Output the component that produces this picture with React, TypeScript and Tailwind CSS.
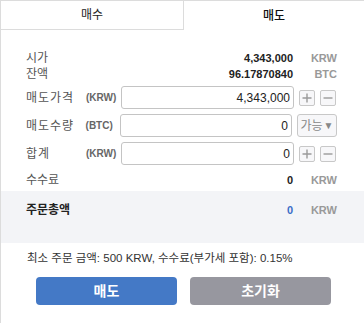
import React from 'react'

const font = { fontFamily: '"Liberation Sans", Arial, "Noto Sans CJK KR", sans-serif' }

function SmallBtn({ children }: { children: React.ReactNode }) {
    return (
        <div className="w-[16px] h-[16px] border border-[#c8c8c8] rounded-[2px] bg-[#f7f7f9] flex items-center justify-center text-[#999]">
            {children}
        </div>
    )
}

function Plus() {
    return (
        <svg width="10" height="10" viewBox="0 0 10 10">
            <path d="M5 0.5v9M0.5 5h9" stroke="#9a9a9a" strokeWidth="1.4" />
        </svg>
    )
}

function Minus() {
    return (
        <svg width="10" height="10" viewBox="0 0 10 10">
            <path d="M0.5 5h9" stroke="#9a9a9a" strokeWidth="1.4" />
        </svg>
    )
}

function InputRow({ label, unit, value, right }: { label: string; unit: string; value: string; right: React.ReactNode }) {
    return (
        <div className="flex items-center h-[23px]">
            <span className="w-[60px] text-[12px] text-[#555] tracking-[1px]">{label}</span>
            <span className="w-[35px] text-[10px] font-bold text-[#666]">{unit}</span>
            <div className="w-[173px] h-[23px] border border-[#c4c4c4] rounded-[3px] bg-white flex items-center justify-end pr-[3px] text-[12px] text-[#222]">
                {value}
            </div>
            <div className="ml-[5px] flex items-center">{right}</div>
        </div>
    )
}

export default function App() {
    return (
        <div className="w-[364px] h-[323px] bg-white border-t border-l border-[#dcdcdc] overflow-hidden" style={font}>
            {/* Tabs */}
            <div className="flex h-[29px]">
                <div className="w-[183px] border-r border-b border-[#dcdcdc] flex items-center justify-center text-[12px] text-[#222]">
                    매수
                </div>
                <div className="flex-1 flex items-center justify-center text-[12px] text-[#111] font-medium">
                    매도
                </div>
            </div>

            <div className="pl-[25px] pr-[27px] pt-[20px]">
                <div className="flex items-center h-[16px]">
                    <span className="flex-1 text-[12px] text-[#555]">시가</span>
                    <span className="text-[11px] font-bold text-[#222]">4,343,000</span>
                    <span className="w-[44px] text-right text-[11px] font-bold text-[#999]">KRW</span>
                </div>
                <div className="flex items-center h-[16px]">
                    <span className="flex-1 text-[12px] text-[#555]">잔액</span>
                    <span className="text-[11px] font-bold text-[#222]">96.17870840</span>
                    <span className="w-[44px] text-right text-[11px] font-bold text-[#999]">BTC</span>
                </div>

                <div className="mt-[4px] flex flex-col gap-[5px]">
                    <InputRow
                        label="매도가격"
                        unit="(KRW)"
                        value="4,343,000"
                        right={<div className="flex gap-[5px]"><SmallBtn><Plus /></SmallBtn><SmallBtn><Minus /></SmallBtn></div>}
                    />
                    <InputRow
                        label="매도수량"
                        unit="(BTC)"
                        value="0"
                        right={
                            <div className="w-[40px] h-[23px] border border-[#c8c8c8] rounded-[3px] bg-[#f7f7f9] flex items-center justify-center text-[12px] text-[#888]">
                                가능<span className="text-[10px] ml-[1px]">▼</span>
                            </div>
                        }
                    />
                    <InputRow
                        label="합계"
                        unit="(KRW)"
                        value="0"
                        right={<div className="flex gap-[5px]"><SmallBtn><Plus /></SmallBtn><SmallBtn><Minus /></SmallBtn></div>}
                    />
                </div>

                <div className="flex items-center h-[16px] mt-[7px]">
                    <span className="flex-1 text-[12px] text-[#555]">수수료</span>
                    <span className="text-[11px] font-bold text-[#222]">0</span>
                    <span className="w-[44px] text-right text-[11px] font-bold text-[#999]">KRW</span>
                </div>
            </div>

            {/* Order total band */}
            <div className="mt-[3px] h-[52px] bg-[#f3f4f7] pl-[25px] pr-[27px] pt-[11px]">
                <div className="flex items-center h-[16px]">
                    <span className="flex-1 text-[12px] font-bold text-[#222]">주문총액</span>
                    <span className="text-[11px] font-bold text-[#3a6cc8]">0</span>
                    <span className="w-[44px] text-right text-[11px] font-bold text-[#999]">KRW</span>
                </div>
            </div>

            <div className="pl-[26px] mt-[8px] text-[11.5px] text-[#333] h-[16px] flex items-center">
                최소 주문 금액: 500 KRW, 수수료(부가세 포함): 0.15%
            </div>

            <div className="flex gap-[13px] pl-[35px] mt-[10px]">
                <button className="w-[141px] h-[28px] rounded-[4px] bg-[#4479c6] text-white text-[14px] font-bold">매도</button>
                <button className="w-[141px] h-[28px] rounded-[4px] bg-[#97979f] text-white text-[14px] font-bold">초기화</button>
            </div>
        </div>
    )
}
